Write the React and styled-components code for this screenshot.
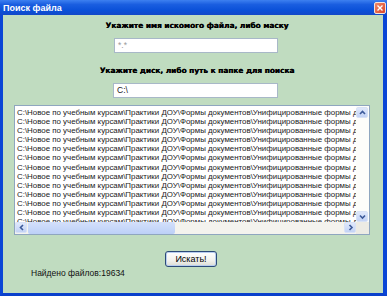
import React from 'react'
import styled, { createGlobalStyle } from 'styled-components'

const GlobalStyle = createGlobalStyle`
  html, body {
    margin: 0;
    padding: 0;
    background: #ffffff;
  }
`

const Window = styled.div`
  width: 387px;
  height: 296px;
  display: flex;
  flex-direction: column;
  overflow: hidden;
  font-family: 'Liberation Sans', Arial, sans-serif;
`

const TitleBar = styled.div`
  height: 15px;
  flex: none;
  display: flex;
  align-items: center;
  justify-content: space-between;
  padding: 0 1px 0 3px;
  background: linear-gradient(180deg, #3d80f0 0%, #1a5ee0 30%, #0a50d8 70%, #1248c8 100%);
  color: #fff;
  font-weight: bold;
  font-size: 9px;
`

const CloseBtn = styled.div`
  width: 10px;
  height: 10px;
  border: 1px solid #f4e4dc;
  border-radius: 2px;
  background: linear-gradient(135deg, #f08a68, #d8442a);
  display: flex;
  align-items: center;
  justify-content: center;
`

const Body = styled.div`
  flex: 1;
  display: flex;
  flex-direction: column;
  background: #c0dcc0;
  border-left: 3px solid #0a46d6;
  border-right: 4px solid #0a46d6;
  border-bottom: 3px solid #0a40cc;
  padding-top: 5px;
`

const Label = styled.div`
  align-self: center;
  margin-left: ${(p) => p.$shift || 0}px;
  font-family: 'DejaVu Sans', Verdana, sans-serif;
  font-weight: bold;
  font-size: 7.4px;
  line-height: 12px;
  color: #000;
  text-shadow: 0.3px 0 0 #000;
`

const Field = styled.div`
  align-self: flex-start;
  margin-left: ${(p) => p.$left}px;
  margin-top: 6px;
  width: ${(p) => p.$width}px;
  height: 15px;
  box-sizing: border-box;
  background: #fff;
  border: 1px solid #a8b8c8;
  font-size: 8.5px;
  line-height: 13px;
  padding-left: 3px;
  color: ${(p) => (p.$dim ? '#9a9a9a' : '#222')};
`

const Gap = styled.div`
  height: ${(p) => p.$h}px;
  flex: none;
`

const ListBox = styled.div`
  flex: none;
  margin: 0 13px 0 11px;
  height: 130px;
  box-sizing: border-box;
  border: 1px solid #8fa6bf;
  background: #fff;
  display: grid;
  grid-template-columns: minmax(0, 1fr) 13px;
  grid-template-rows: minmax(0, 1fr) 12px;
`

const Rows = styled.div`
  overflow: hidden;
  padding: 2px 0 0 2px;
`

const Row = styled.div`
  white-space: nowrap;
  font-size: 7.9px;
  line-height: 9.1px;
  color: #1a1a1a;
`

const VScroll = styled.div`
  display: flex;
  flex-direction: column;
  justify-content: space-between;
  background: #fdfdfa;
  padding-top: 1px;
`

const HScroll = styled.div`
  display: flex;
  align-items: stretch;
  background: #f4f3ee;
`

const Arrow = styled.div`
  width: 12px;
  height: 11px;
  flex: none;
  box-sizing: border-box;
  background: linear-gradient(180deg, #dfe8fb, #c3d3f5);
  border: 1px solid #d8e2f6;
  border-radius: 2px;
  display: flex;
  align-items: center;
  justify-content: center;
`

const Thumb = styled.div`
  width: 147px;
  margin: 0 1px;
  background: linear-gradient(180deg, #d4e0fb, #bcd0f7);
  border-radius: 2px;
`

const Spacer = styled.div`
  flex: 1;
`

const Corner = styled.div`
  background: #ecebe4;
`

const Button = styled.button`
  align-self: flex-start;
  flex: none;
  margin: 16px 0 0 162px;
  width: 52px;
  height: 16px;
  padding: 0;
  box-sizing: border-box;
  border: 1px solid #2c4a78;
  border-radius: 3px;
  background: linear-gradient(180deg, #ffffff 0%, #f2f2ee 60%, #dcdcd4 100%);
  box-shadow: inset 0 0 0 1px #b8cef0;
  font-family: 'Liberation Sans', Arial, sans-serif;
  font-size: 9px;
  color: #000;
`

const Status = styled.div`
  margin: 1px 0 0 28px;
  font-size: 8.5px;
  line-height: 10px;
  color: #111;
`

const Chevron = ({ dir }) => {
  const paths = {
    up: 'M2 6 L4.5 3.5 L7 6',
    down: 'M2 3.5 L4.5 6 L7 3.5',
    left: 'M6 2 L3.5 4.5 L6 7',
    right: 'M3.5 2 L6 4.5 L3.5 7',
  }
  return (
    <svg width="9" height="9" viewBox="0 0 9 9">
      <path d={paths[dir]} fill="none" stroke="#3c5a9a" strokeWidth="1.6" />
    </svg>
  )
}

const line =
  'C:\\Новое по учебным курсам\\Практики ДОУ\\Формы документов\\Унифицированные формы до'

export default function App() {
  const rows = Array.from({ length: 13 }, (_, i) => i)
  return (
    <Window>
      <GlobalStyle />
      <TitleBar>
        <span>Поиск файла</span>
        <CloseBtn>
          <svg width="6" height="6" viewBox="0 0 6 6">
            <path d="M0.5 0.5 L5.5 5.5 M5.5 0.5 L0.5 5.5" stroke="#fff" strokeWidth="1.4" />
          </svg>
        </CloseBtn>
      </TitleBar>
      <Body>
        <Label $shift={8}>Укажите имя искомого файла, либо маску</Label>
        <Field $left={111} $width={164} $dim>
          *.*
        </Field>
        <Gap $h={12} />
        <Label $shift={8}>Укажите диск, либо путь к папке для поиска</Label>
        <Field $left={110} $width={165}>
          C:\
        </Field>
        <Gap $h={7} />
        <ListBox>
          <Rows>
            {rows.map((i) => (
              <Row key={i}>{line}</Row>
            ))}
          </Rows>
          <VScroll>
            <Arrow>
              <Chevron dir="up" />
            </Arrow>
            <Arrow>
              <Chevron dir="down" />
            </Arrow>
          </VScroll>
          <HScroll>
            <Arrow>
              <Chevron dir="left" />
            </Arrow>
            <Thumb />
            <Spacer />
            <Arrow>
              <Chevron dir="right" />
            </Arrow>
          </HScroll>
          <Corner />
        </ListBox>
        <Button>Искать!</Button>
        <Status>Найдено файлов:19634</Status>
      </Body>
    </Window>
  )
}
